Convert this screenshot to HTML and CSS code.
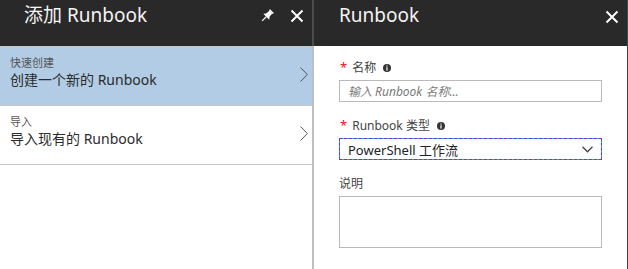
FILE: index.html
```html
<!DOCTYPE html>
<html lang="zh-CN">

<head>
    <meta charset="UTF-8">
    <meta name="viewport" content="width=device-width, initial-scale=1.0">
    <title>添加 Runbook</title>
    <link rel="stylesheet" href="styles.css">
</head>
<body>
    <div class="portal">
        <section class="blade blade-add">
            <header class="blade-header">
                <h1 class="blade-title">添加 Runbook</h1>
                <div class="blade-actions">
                    <span class="icon">
                        <svg width="14" height="14" viewBox="0 0 14 14">
                            <g transform="rotate(45 7 7)" fill="#fff">
                                <rect x="4.3" y="0" width="5.4" height="1.6"/>
                                <polygon points="5,1.6 9,1.6 9.4,5.8 11.2,8 2.8,8 4.6,5.8"/>
                                <rect x="6.4" y="8" width="1.2" height="6"/>
                            </g>
                        </svg>
                    </span>
                    <span class="icon">
                        <svg width="14" height="14" viewBox="0 0 14 14">
                            <path d="M1.5 1.5 L12.5 12.5 M12.5 1.5 L1.5 12.5" stroke="#fff" stroke-width="2"/>
                        </svg>
                    </span>
                </div>
            </header>
            <ul class="option-list">
                <li class="option option-selected">
                    <div class="option-text">
                        <span class="option-label">快速创建</span>
                        <span class="option-name">创建一个新的 Runbook</span>
                    </div>
                    <svg class="chevron" width="8" height="15" viewBox="0 0 8 15">
                        <polyline points="0.5,0.5 7.3,7.5 0.5,14.5" fill="none" stroke="#555" stroke-width="1"/>
                    </svg>
                </li>
                <li class="option">
                    <div class="option-text">
                        <span class="option-label">导入</span>
                        <span class="option-name">导入现有的 Runbook</span>
                    </div>
                    <svg class="chevron" width="8" height="15" viewBox="0 0 8 15">
                        <polyline points="0.5,0.5 7.3,7.5 0.5,14.5" fill="none" stroke="#555" stroke-width="1"/>
                    </svg>
                </li>
            </ul>
        </section>

        <section class="blade blade-form">
            <header class="blade-header">
                <h1 class="blade-title">Runbook</h1>
                <div class="blade-actions">
                    <span class="icon">
                        <svg width="14" height="14" viewBox="0 0 14 14">
                            <path d="M1.5 1.5 L12.5 12.5 M12.5 1.5 L1.5 12.5" stroke="#fff" stroke-width="2"/>
                        </svg>
                    </span>
                </div>
            </header>
            <form class="form">
                <div class="field">
                    <label class="field-label">
                        <span class="required">*</span>名称
                        <svg class="info" width="8" height="8" viewBox="0 0 8 8">
                            <circle cx="4" cy="4" r="4" fill="#333"/>
                            <rect x="3.4" y="1.4" width="1.2" height="1.1" fill="#fff"/>
                            <rect x="3.4" y="3.2" width="1.2" height="3.4" fill="#fff"/>
                        </svg>
                    </label>
                    <input class="text-input" type="text" placeholder="输入 Runbook 名称...">
                </div>
                <div class="field">
                    <label class="field-label">
                        <span class="required">*</span>Runbook 类型
                        <svg class="info" width="8" height="8" viewBox="0 0 8 8">
                            <circle cx="4" cy="4" r="4" fill="#333"/>
                            <rect x="3.4" y="1.4" width="1.2" height="1.1" fill="#fff"/>
                            <rect x="3.4" y="3.2" width="1.2" height="3.4" fill="#fff"/>
                        </svg>
                    </label>
                    <div class="dropdown">
                        <span>PowerShell 工作流</span>
                        <svg width="11" height="7" viewBox="0 0 11 7">
                            <polyline points="0.5,0.8 5.5,5.8 10.5,0.8" fill="none" stroke="#444" stroke-width="1.3"/>
                        </svg>
                    </div>
                </div>
                <div class="field">
                    <label class="field-label">说明</label>
                    <textarea class="text-area"></textarea>
                </div>
            </form>
        </section>
    </div>
</body>
</html>
```

FILE: styles.css
```css
* {
    margin: 0;
    padding: 0;
    box-sizing: border-box;
}
body {
    font-family: "Noto Sans", "Noto Sans CJK SC", sans-serif;
    background-color: #fff;
}
.portal {
    display: flex;
    height: 100vh;
    overflow: hidden;
}
.blade {
    display: flex;
    flex-direction: column;
    height: 100%;
}
.blade-add {
    width: 314px;
}
.blade-form {
    width: 314px;
    border-right: 1px solid #2d4b62;
}
.blade-header {
    height: 46px;
    display: flex;
    justify-content: space-between;
    align-items: flex-start;
    background-color: #292929;
    color: #f4f4f4;
    padding: 3px 8px 0 24px;
}
.blade-add .blade-header {
    border-right: 2px solid #4c4c4c;
}
.blade-form .blade-header {
    padding-left: 25px;
}
.blade-title {
    font-size: 19px;
    font-weight: normal;
    line-height: 24px;
}
.blade-actions {
    display: flex;
    gap: 16px;
    margin-top: 6px;
}
.blade-form .blade-actions {
    margin-top: 7px;
}
.icon {
    display: block;
    width: 14px;
    height: 14px;
}
.icon svg {
    display: block;
}
.option-list {
    list-style: none;
    flex: 1;
    border-right: 2px solid #bfbfbf;
}
.option {
    display: flex;
    align-items: center;
    justify-content: space-between;
    padding: 9px 4px 16px 10px;
    border-bottom: 1px solid #c6c6c6;
}
.option:first-child {
    border-top: 1px solid #c6c6c6;
}
.option-selected {
    background-color: #b1cce4;
}
.option-text {
    display: flex;
    flex-direction: column;
}
.option-label {
    font-size: 11px;
    line-height: 14px;
    color: #555;
}
.option-name {
    font-size: 14px;
    line-height: 19px;
    color: #2b2b2b;
}
.chevron {
    margin-top: 4px;
}
.form {
    padding: 14px 25px 0 25px;
}
.field {
    margin-bottom: 16px;
}
.field-label {
    display: flex;
    align-items: center;
    font-size: 12px;
    line-height: 16px;
    color: #444;
    margin-bottom: 4px;
}
.required {
    color: #e81123;
    font-size: 13px;
    margin: 0 5px 0 1px;
    align-self: flex-start;
    line-height: 14px;
}
.info {
    margin-left: 7px;
}
.text-input {
    display: block;
    width: 100%;
    height: 22px;
    border: 1px solid #bababa;
    padding: 0 8px;
    font-family: "Noto Sans", "Noto Sans CJK SC", sans-serif;
    font-size: 12px;
    outline: none;
}
.text-input::placeholder {
    color: #7a7a7a;
    font-style: italic;
}
.dropdown {
    display: flex;
    align-items: center;
    justify-content: space-between;
    height: 22px;
    padding: 0 8px 0 8px;
    border: 1px solid #00b7f0;
    outline: 1px dashed #8d2bc4;
    outline-offset: -1px;
    font-size: 13px;
    color: #222;
}
.text-area {
    display: block;
    width: 100%;
    height: 52px;
    border: 1px solid #bababa;
    resize: none;
    outline: none;
}
```
